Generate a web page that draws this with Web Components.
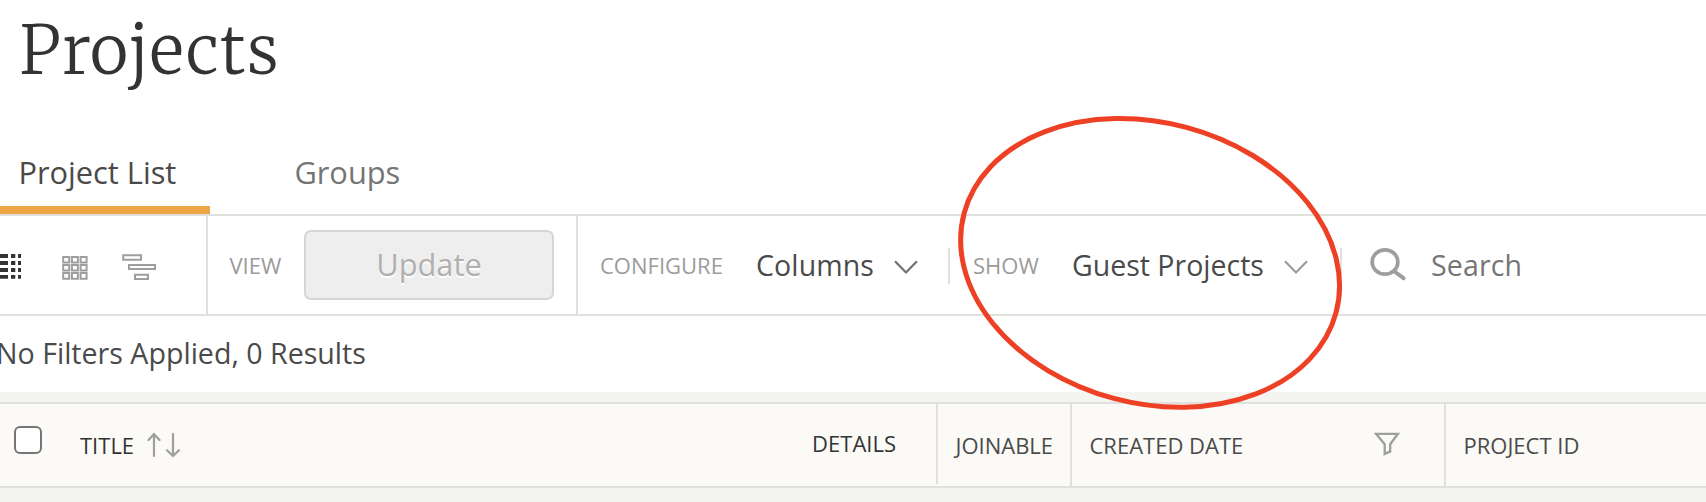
<!DOCTYPE html>
<html lang="en">
<head>
<meta charset="utf-8">
<title>Projects</title>
<style>
html,body{margin:0;height:100%;overflow:hidden;background:#fff;font-family:"Open Sans",sans-serif}
</style>
</head>
<body>
<projects-page></projects-page>
<script>
const define = (name, html) => customElements.define(name, class extends HTMLElement {
  constructor() {
    super();
    const t = document.createElement('template');
    t.innerHTML = html;
    this.attachShadow({mode: 'open'}).append(t.content.cloneNode(true));
  }
});

define('page-title', `<style>
:host{display:block;height:130px;padding-left:19.3px;box-sizing:border-box}
h1{margin:0;font:300 66px/101px Merriweather,"Liberation Serif",serif;letter-spacing:1.3px;color:#333}
</style><h1><slot></slot></h1>`);

define('tab-item', `<style>
:host{display:block;box-sizing:border-box;width:210px;height:84px;padding-left:18.4px;font-size:30.8px;line-height:84px;color:#757575;white-space:nowrap}
:host([active]){color:#4a4a4a;border-bottom:8px solid #f0a646}
</style><slot></slot>`);

define('tab-bar', `<style>
:host{display:flex;gap:66px;height:84px;border-bottom:2px solid #e0e1dc}
</style><slot></slot>`);

define('tool-label', `<style>
:host{display:block;font-size:22px;color:#9b9b9b;white-space:nowrap}
</style><slot></slot>`);

define('tool-button', `<style>
:host{display:block;box-sizing:border-box;width:250px;height:70px;border:2px solid #d6d6d6;border-radius:7px;background:#eee;color:#b0b0b0;font-size:30.8px;line-height:64px;text-align:center;text-shadow:0 2px 1px #fff}
</style><slot></slot>`);

define('drop-down', `<style>
:host{display:flex;align-items:center;font-size:28.5px;color:#4a4a4a;white-space:nowrap;--chevron:#707070}
:host([muted]){--chevron:#9b9b9b}
svg{display:block;margin:4px 0 0 var(--gap,20px)}
path{fill:none;stroke:var(--chevron);stroke-width:2.2}
</style><slot></slot><svg width="24" height="14"><path d="M1 1.2 12 12.4 23 1.2"/></svg>`);

define('short-rule', `<style>
:host{display:block;width:2px;height:36px;margin-bottom:-2px;background:#e0e1dc}
</style>`);

define('view-switch', `<style>
:host{display:block;width:206px;height:98px;border-right:2px solid #e0e1dc}
svg{display:block}
</style><svg width="206" height="98">
<g fill="#333"><path d="M0 38h8v4H0zM0 45h8v4H0zM0 52h8v4H0zM0 59h8v3.7H0zM11 38h4.3v4H11zM11 45h4.3v4H11zM11 52h4.3v4H11zM11 59h4.3v3.7H11zM18 38h3v4h-3zM18 45h3v4h-3zM18 52h3v4h-3zM18 59h3v3.7h-3z"/></g>
<g fill="none" stroke="#9e9e9e" stroke-width="2">
<path d="M63.2 41h6v5.6h-6zM71.9 41h6v5.6h-6zM80.6 41h6v5.6h-6zM63.2 49h6v5.6h-6zM71.9 49h6v5.6h-6zM80.6 49h6v5.6h-6zM63.2 57.1h6v5.6h-6zM71.9 57.1h6v5.6h-6zM80.6 57.1h6v5.6h-6z"/>
<path d="M123.2 39.2h17.8v4.6h-17.8zM129 49h26v4h-26zM135 58.7h13v4.4h-13z"/></g></svg>`);

define('search-field', `<style>
:host{display:flex;align-items:center;font-size:28.5px;letter-spacing:.15px;color:#757575}
svg{display:block;margin-right:23px}
</style><svg width="38" height="36" fill="none" stroke="#9e9e9e"><ellipse cx="15" cy="15" rx="12.8" ry="12.2" stroke-width="3.8"/><path d="M24.5 24.5 33.5 31.2" stroke-width="4" stroke-linecap="round"/></svg><slot></slot>`);

define('tool-bar', `<style>
:host{display:flex;height:98px;border-bottom:2px solid #e0e1dc}
div{display:flex;align-items:center;box-sizing:border-box}
.view{width:370px;padding-left:21.5px;border-right:2px solid #e0e1dc}
.view tool-label{width:74.5px}
.rest{flex:1;padding-left:22px}
.configure{width:156px}.columns{width:192px;--gap:20px;letter-spacing:.12px}
.show{width:99px;padding-left:23px}
.guest{width:268px;--gap:20px}
search-field{padding-left:28px}
</style>
<view-switch></view-switch>
<div class="view"><tool-label>VIEW</tool-label><tool-button>Update</tool-button></div>
<div class="rest"><tool-label class="configure">CONFIGURE</tool-label><drop-down class="columns">Columns</drop-down>
<short-rule></short-rule><tool-label class="show">SHOW</tool-label><drop-down class="guest" muted>Guest Projects</drop-down>
<short-rule></short-rule><search-field>Search</search-field></div>`);

define('result-summary', `<style>
:host{display:block;height:76px;margin-left:-4px;font-size:28.6px;line-height:73px;color:#4a4a4a;white-space:nowrap}
</style><slot></slot>`);

define('check-box', `<style>
:host{display:block;box-sizing:border-box;width:28px;height:28px;border:2px solid #767676;border-radius:6px;background:#fff;margin-bottom:10px}
</style>`);

define('sort-arrows', `<style>:host{display:block;margin-left:12.8px}svg{display:block}</style>
<svg width="34" height="26" fill="none" stroke="#9e9e9e" stroke-width="2.2" stroke-linecap="round"><path d="M7 24V2M1.5 8 7 2.2 12.5 8M26 2v22M20 18.2 26 24l6-5.8"/></svg>`);

define('filter-icon', `<style>:host{display:block;margin-bottom:2px}svg{display:block}</style>
<svg width="26" height="24" fill="none" stroke="#9e9e9e" stroke-width="2.3"><path d="M2 1.8h22L16.2 12.2v7.2L10.7 22v-9.8z"/></svg>`);

define('header-cell', `<style>
:host{display:flex;align-items:center;box-sizing:border-box;height:82px;border-right:2px solid #e0e1dc;font-size:22px;color:#4a4a4a;white-space:nowrap}
</style><slot></slot>`);

define('table-header', `<style>
:host{display:flex;height:82px;border-top:2px solid #e0e1dc;border-bottom:2px solid #e0e1dc;background:#fbfaf6}
.title{width:938px;height:80px;padding:2px 40px 0 14px;color:#333}
.name{margin-left:38px}.details{margin-left:auto;padding-bottom:4px}
.join{width:134px;padding-left:17.5px}
.date{width:374px;padding:0 44.5px 0 17.5px;justify-content:space-between}
.id{flex:1;border:0;padding-left:17.5px}
</style>
<header-cell class="title"><check-box></check-box><span class="name">TITLE</span><sort-arrows></sort-arrows><span class="details">DETAILS</span></header-cell>
<header-cell class="join">JOINABLE</header-cell>
<header-cell class="date"><span>CREATED DATE</span><filter-icon></filter-icon></header-cell>
<header-cell class="id">PROJECT ID</header-cell>`);

define('highlight-ring', `<style>
:host{position:absolute;left:940px;top:100px;pointer-events:none}svg{display:block}
</style><svg width="420" height="324"><ellipse cx="210.1" cy="162.9" rx="192.5" ry="140.3" transform="rotate(15 210.1 162.9)" fill="none" stroke="#ed4024" stroke-width="5"/></svg>`);

define('projects-page', `<style>
:host{display:block;position:relative;width:1706px;height:502px;overflow:hidden}
.table{padding-top:10px;height:100px;background:#f4f5f0}
</style>
<page-title>Projects</page-title>
<tab-bar><tab-item active>Project List</tab-item><tab-item>Groups</tab-item></tab-bar>
<tool-bar></tool-bar>
<result-summary>No Filters Applied, 0 Results</result-summary>
<div class="table"><table-header></table-header></div>
<highlight-ring></highlight-ring>`);
</script>
</body>
</html>
